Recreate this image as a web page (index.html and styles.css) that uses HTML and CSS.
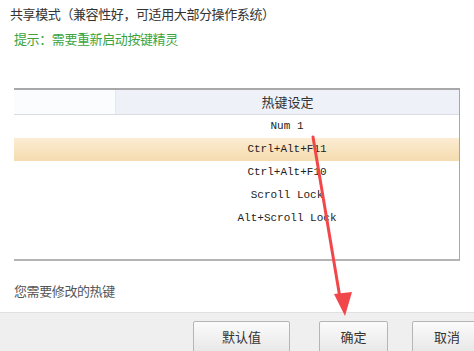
FILE: index.html
```html
<!DOCTYPE html>
<html lang="zh-CN">
<head>
  <meta charset="UTF-8">
  <title>热键设定</title>
  <link rel="stylesheet" href="styles.css">
</head>
<body>
  <div class="mode">共享模式（兼容性好，可适用大部分操作系统）</div>
  <div class="tip">提示：需要重新启动按键精灵</div>

  <div class="grid">
    <div class="grid-head">
      <div class="col-a"></div>
      <div class="col-b">热键设定</div>
    </div>
    <div class="grid-body">
      <div class="row"><div class="col-a"></div><div class="col-b key">Num 1</div></div>
      <div class="row selected"><div class="col-a"></div><div class="col-b key">Ctrl+Alt+F11</div></div>
      <div class="row"><div class="col-a"></div><div class="col-b key">Ctrl+Alt+F10</div></div>
      <div class="row"><div class="col-a"></div><div class="col-b key">Scroll Lock</div></div>
      <div class="row"><div class="col-a"></div><div class="col-b key">Alt+Scroll Lock</div></div>
    </div>
  </div>

  <div class="hint">您需要修改的热键</div>

  <div class="footer">
    <button class="btn btn-wide">默认值</button>
    <button class="btn">确定</button>
    <button class="btn btn-cut">取消</button>
  </div>

  <svg class="arrow" width="474" height="351" viewBox="0 0 474 351">
    <line x1="313" y1="137" x2="340" y2="298" stroke="#f2474a" stroke-width="3" stroke-linecap="round"/>
    <polygon points="334,294 352,292 345,316" fill="#f2474a"/>
  </svg>
</body>
</html>
```

FILE: styles.css
```css
body { margin: 0; width: 474px; height: 351px; overflow: hidden; background: #fff; font-family: "Noto Sans CJK SC", "Microsoft YaHei", sans-serif; font-size: 13px; color: #333; position: relative; }

.mode { padding: 4px 0 0 10px; height: 20px; line-height: 20px; letter-spacing: -0.4px; }
.tip { padding: 5px 0 0 14px; height: 20px; line-height: 20px; color: #3aa53f; letter-spacing: -0.4px; }

.grid { margin: 39px 0 0 14px; width: 446px; height: 173px; border-top: 2px solid #a8a8a8; border-right: 1px solid #a8a8a8; border-bottom: 2px solid #b4b4b4; box-sizing: border-box; }
.grid-head { display: flex; height: 24px; border-bottom: 1px solid #d9dde3; }
.grid-head .col-a { width: 101px; background: #fbfcfd; border-right: 1px solid #e3e7ee; }
.grid-head .col-b { flex: 1; background: #eef2f8; text-align: center; line-height: 24px; color: #333; }

.row { display: flex; height: 23px; line-height: 23px; }
.row .col-a { width: 101px; }
.row .col-b { flex: 1; text-align: center; }
.row.selected { background: linear-gradient(#fcecd2, #f5dcb0); }
.key { font-family: "Liberation Mono", monospace; font-size: 11px; color: #222; }

.hint { padding: 21px 0 0 14px; height: 20px; line-height: 18px; color: #555; letter-spacing: -0.4px; }

.footer { position: absolute; left: 0; top: 312px; width: 474px; height: 39px; background: #efefef; border-top: 1px solid #e0e0e0; box-sizing: border-box; display: flex; align-items: flex-start; padding: 8px 0 0 193px; gap: 0; }
.btn { height: 34px; width: 69px; margin-right: 24px; border: 1px solid #b5b5b5; border-radius: 2px; background: linear-gradient(#fbfbfb, #e6e6e6); font-family: "Noto Sans CJK SC", sans-serif; font-size: 13px; color: #333; padding: 0 0 4px; flex-shrink: 0; }
.btn-wide { width: 97px; margin-right: 29px; }
.btn-cut { width: 70px; margin-right: 0; }

.arrow { position: absolute; left: 0; top: 0; pointer-events: none; }
```
